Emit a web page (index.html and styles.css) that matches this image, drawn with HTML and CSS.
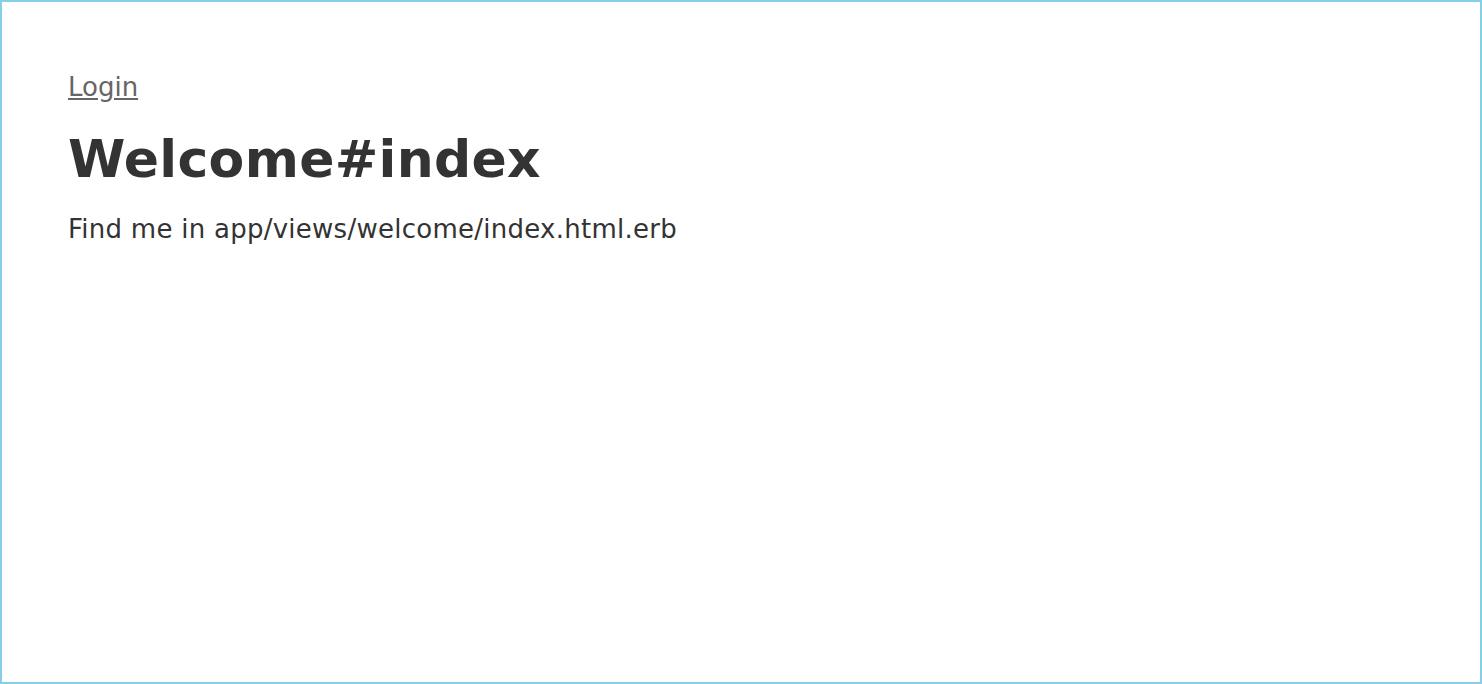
FILE: index.html
```html
<!DOCTYPE html>
<html>
<head>
<meta charset="utf-8">
<link rel="stylesheet" href="styles.css">
</head>
<body>
<div class="frame">
  <nav class="nav"><a class="login" href="#">Login</a></nav>
  <h1 class="title">Welcome#index</h1>
  <p class="lead">Find me in app/views/welcome/index.html.erb</p>
</div>
</body>
</html>
```
FILE: styles.css
```css
html, body {
  margin: 0;
  padding: 0;
  height: 100%;
}
body {
  font-family: "DejaVu Sans", Verdana, sans-serif;
  color: #333;
  background: #fff;
}
.frame {
  box-sizing: border-box;
  height: 684px;
  border: 2px solid #87ceeb;
  padding: 70px 66px 0 66px;
}
.nav {
  font-size: 26px;
  line-height: 30px;
}
.login {
  color: #666;
  text-decoration: underline;
}
.title {
  margin: 27px 0 0 0;
  font-size: 52px;
  line-height: 60px;
  font-weight: bold;
  letter-spacing: 0.3px;
  color: #333;
}
.lead {
  margin: 25px 0 0 0;
  font-size: 26px;
  line-height: 30px;
  letter-spacing: 0.26px;
}
```
